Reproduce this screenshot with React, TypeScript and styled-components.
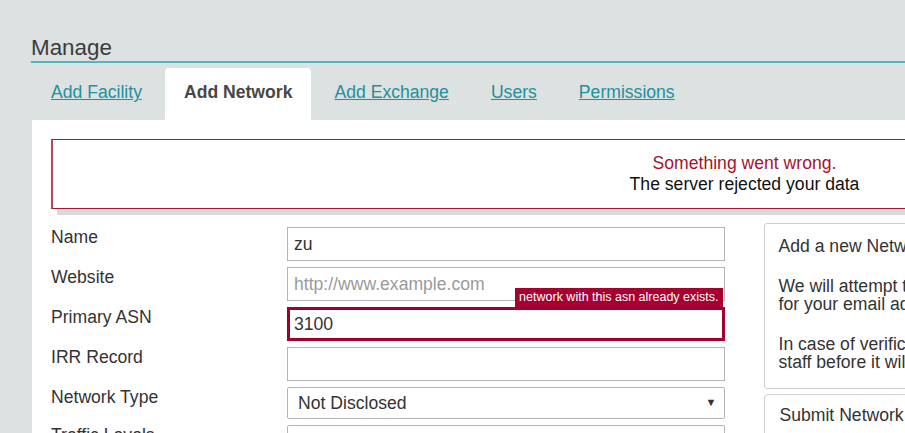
import React from "react";
import styled, { createGlobalStyle } from "styled-components";

const GlobalStyle = createGlobalStyle`
  html, body {
    margin: 0;
    padding: 0;
    overflow: hidden;
    background: #dce1e1;
  }
  body {
    font-family: "Liberation Sans", Arial, sans-serif;
    font-size: 17.6px;
    color: #333;
  }
`;

const Page = styled.div`
  width: 1425px;
  padding: 35px 0 0 31px;
`;

const Heading = styled.h1`
  margin: 0;
  font-size: 22.4px;
  font-weight: 400;
  line-height: 26px;
  color: #3b3b3b;
  border-bottom: 2px solid #4cb7c0;
`;

const TabBar = styled.div`
  display: flex;
  margin: 5px 0 0 1px;
`;

const Tab = styled.div<{ $active?: boolean }>`
  height: 52px;
  line-height: 49px;
  padding: 0 19px;
  margin-right: 4px;
  border-radius: 4px 4px 0 0;
  background: ${(p) => (p.$active ? "#fff" : "transparent")};
  font-weight: ${(p) => (p.$active ? 700 : 400)};
  color: ${(p) => (p.$active ? "#474747" : "#23909b")};

  a {
    color: inherit;
    text-decoration: underline;
  }
`;

const Panel = styled.div`
  margin-left: 1px;
  background: #fff;
  padding: 19px 19px 40px;
`;

const ErrorBox = styled.div`
  border: 1px solid #9b1a34;
  border-left: 2px solid #b9455d;
  box-shadow: 6px 6px 0 #d9d9d9;
  padding: 13px 0;
  text-align: center;
  margin-bottom: 14px;
`;

const ErrorTitle = styled.div`
  color: #a3142f;
`;

const ErrorText = styled.div`
  color: #111;
`;

const Columns = styled.div`
  display: grid;
  grid-template-columns: 1fr 1fr;
  gap: 39px;
`;

const Form = styled.div`
  padding-top: 4px;
  display: flex;
  flex-direction: column;
  gap: 6px;
`;

const Row = styled.div`
  display: grid;
  grid-template-columns: 236px 1fr;
  align-items: start;
`;

const Label = styled.label`
  color: #333;
  line-height: normal;
`;

const Field = styled.div`
  position: relative;
`;

const Input = styled.input<{ $error?: boolean }>`
  box-sizing: border-box;
  display: block;
  width: 100%;
  height: 34px;
  margin: 0;
  padding: 0 ${(p) => (p.$error ? "4px" : "6px")};
  border: ${(p) => (p.$error ? "3px solid #a0002b" : "1px solid #b4b4b4")};
  background: #fff;
  font-family: "Liberation Sans", Arial, sans-serif;
  font-size: 17.6px;
  color: #333;
  outline: none;

  &::placeholder {
    color: #9a9a9a;
  }
`;

const Tip = styled.div`
  position: absolute;
  right: 2px;
  bottom: 100%;
  background: #a50030;
  color: #fff;
  font-size: 12.5px;
  line-height: 16px;
  padding: 1px 4px 2px;
  white-space: nowrap;
`;

const Select = styled.select`
  box-sizing: border-box;
  display: block;
  width: 100%;
  height: 32px;
  margin: 0;
  padding: 0 24px 0 10px;
  border: 1px solid #b4b4b4;
  border-radius: 2px;
  background: #fff;
  appearance: none;
  font-family: "Liberation Sans", Arial, sans-serif;
  font-size: 17.6px;
  color: #333;
  outline: none;
`;

const Caret = styled.span`
  position: absolute;
  right: 8px;
  top: 9px;
  font-size: 11px;
  line-height: 12px;
  color: #333;
  pointer-events: none;
`;

const Side = styled.div`
  display: flex;
  flex-direction: column;
  gap: 5px;
`;

const InfoBox = styled.div`
  border: 1px solid #cfcfcf;
  border-radius: 3px;
  padding: 13px 14px 17px;
  line-height: 18px;
  color: #333;

  p {
    margin: 0 0 22px;
  }
  p:last-child {
    margin: 0;
  }
`;

const SubmitBox = styled.div`
  border: 1px solid #cfcfcf;
  border-radius: 4px;
  padding: 11px 15px;
  line-height: 18px;
  color: #333;
  height: 60px;
`;

const rows: { label: string; value?: string; placeholder?: string; error?: string; select?: string }[] = [
  { label: "Name", value: "zu" },
  { label: "Website", placeholder: "http://www.example.com" },
  { label: "Primary ASN", value: "3100", error: "network with this asn already exists." },
  { label: "IRR Record" },
  { label: "Network Type", select: "Not Disclosed" },
  { label: "Traffic Levels", select: "Not Disclosed" },
  { label: "Traffic Ratios", select: "Not Disclosed" },
];

function App() {
  return (
    <>
      <GlobalStyle />
      <Page>
        <Heading>Manage</Heading>
        <TabBar>
          <Tab><a href="#">Add Facility</a></Tab>
          <Tab $active>Add Network</Tab>
          <Tab><a href="#">Add Exchange</a></Tab>
          <Tab><a href="#">Users</a></Tab>
          <Tab><a href="#">Permissions</a></Tab>
        </TabBar>
        <Panel>
          <ErrorBox>
            <ErrorTitle>Something went wrong.</ErrorTitle>
            <ErrorText>The server rejected your data</ErrorText>
          </ErrorBox>
          <Columns>
            <Form>
              {rows.map((r) => (
                <Row key={r.label}>
                  <Label>{r.label}</Label>
                  <Field>
                    {r.select ? (
                      <>
                        <Select defaultValue={r.select}>
                          <option>{r.select}</option>
                        </Select>
                        <Caret>▼</Caret>
                      </>
                    ) : (
                      <Input
                        $error={!!r.error}
                        defaultValue={r.value}
                        placeholder={r.placeholder}
                      />
                    )}
                    {r.error && <Tip>{r.error}</Tip>}
                  </Field>
                </Row>
              ))}
            </Form>
            <Side>
              <InfoBox>
                <p>Add a new Network to the database.</p>
                <p>
                  We will attempt to automatically verify the network by checking the RIR records
                  <br />
                  for your email address.
                </p>
                <p>
                  In case of verification failure the network will need to be reviewed by PeeringDB
                  <br />
                  staff before it will be approved and available in the database.
                </p>
              </InfoBox>
              <SubmitBox>Submit Network</SubmitBox>
            </Side>
          </Columns>
        </Panel>
      </Page>
    </>
  );
}

export default App;
